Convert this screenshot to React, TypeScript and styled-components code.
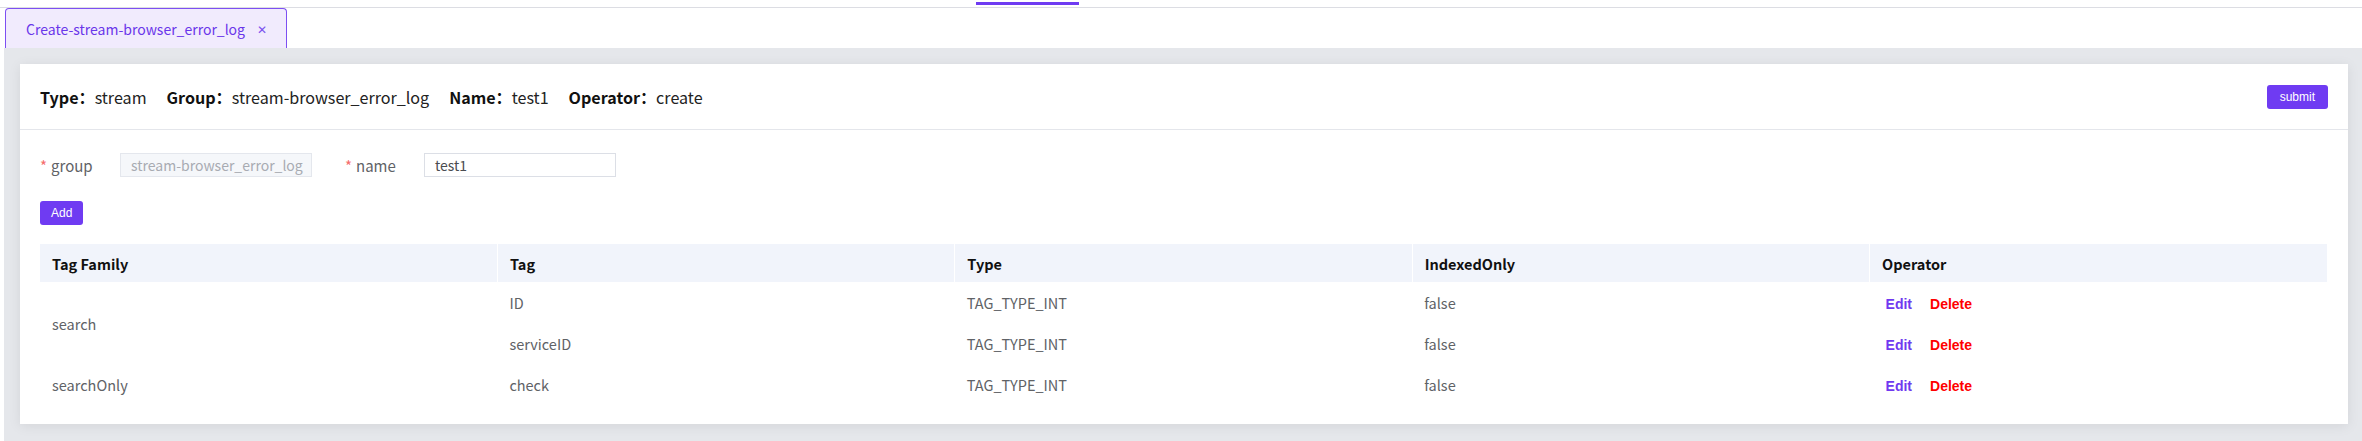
import styled, { createGlobalStyle } from "styled-components";

const GlobalStyles = createGlobalStyle`
  html, body {
    margin: 0;
    padding: 0;
    background: #ffffff;
    font-family: "Noto Sans CJK SC", "Noto Sans", sans-serif;
  }
  * {
    box-sizing: border-box;
  }
`;

const purple = "#6f3bf2";

const NavStrip = styled.div`
  height: 6px;
  padding-left: 976px;
  border-bottom: 1px solid #dcdde3;
`;

const NavIndicator = styled.div`
  width: 103px;
  height: 3px;
  margin-top: 2px;
  background: ${purple};
`;

const TabsBar = styled.div`
  display: flex;
  height: 40px;
  padding-left: 5px;
`;

const Tab = styled.div`
  display: flex;
  align-items: center;
  gap: 12px;
  height: 40px;
  width: 282px;
  padding: 0 0 0 20px;
  background: #f1ebfd;
  border: 1px solid #7d4ff2;
  border-bottom: none;
  border-radius: 4px 4px 0 0;
  color: #6a36ea;
  font-size: 14px;
`;

const Close = styled.span`
  font-size: 12px;
  color: #7b52ee;
`;

const Content = styled.div`
  margin-left: 4px;
  padding: 16px 14px 17px 16px;
  background: #e5e7eb;
`;

const Card = styled.div`
  background: #ffffff;
  box-shadow: 0 2px 12px rgba(0, 0, 0, 0.08);
`;

const CardHeader = styled.div`
  display: flex;
  align-items: center;
  justify-content: space-between;
  height: 66px;
  padding: 0 20px;
  border-bottom: 1px solid #e4e6eb;
`;

const Summary = styled.div`
  display: flex;
  gap: 20px;
  font-size: 16.1px;
  color: #222;
`;

const SummaryItem = styled.span`
  b {
    font-weight: 700;
    color: #111;
  }
`;

const Button = styled.button<{ $wide?: boolean }>`
  height: 24px;
  padding: 0 ${(p) => (p.$wide ? "13px" : "11px")};
  border: none;
  border-radius: 3px;
  background: ${purple};
  color: #fff;
  font-family: "Liberation Sans", Arial, sans-serif;
  font-size: 12px;
`;

const CardBody = styled.div`
  padding: 23px 21px 19px 20px;
`;

const FormRow = styled.div`
  display: flex;
  align-items: center;
  height: 24px;
`;

const Label = styled.label<{ $w: number }>`
  width: ${(p) => p.$w}px;
  font-size: 15px;
  color: #606266;
  &::before {
    content: "*";
    color: #f56c6c;
    margin-right: 4px;
  }
`;

const Input = styled.div<{ $disabled?: boolean }>`
  width: 192px;
  height: 24px;
  margin-right: 33px;
  padding: 0 10px;
  display: flex;
  align-items: center;
  white-space: nowrap;
  overflow: hidden;
  border: 1px solid ${(p) => (p.$disabled ? "#e4e7ed" : "#dcdfe6")};
  background: ${(p) => (p.$disabled ? "#f5f7fa" : "#ffffff")};
  color: ${(p) => (p.$disabled ? "#a8abb2" : "#4a4c50")};
  font-size: 14px;
`;

const AddRow = styled.div`
  margin: 21px 0 22px;
  height: 24px;
`;

const Table = styled.table`
  width: 100%;
  border-collapse: collapse;
  table-layout: fixed;
  font-size: 14.5px;
`;

const Th = styled.th`
  height: 38px;
  padding: 0 12px;
  text-align: left;
  background: #f1f4fb;
  border-right: 1px solid #ffffff;
  color: #111;
  font-weight: 700;
  &:last-child {
    border-right: none;
  }
`;

const Td = styled.td`
  height: 41px;
  padding: 0 12px;
  color: #606266;
`;

const Action = styled.span<{ $danger?: boolean }>`
  margin: 0 ${(p) => (p.$danger ? "0 0 18px" : "0 0 4px")};
  font-family: "Liberation Sans", Arial, sans-serif;
  font-size: 14px;
  font-weight: 700;
  color: ${(p) => (p.$danger ? "#ff0000" : "#7039f0")};
`;

const rows = [
  { family: "search", span: 2, tag: "ID" },
  { family: null, span: 0, tag: "serviceID" },
  { family: "searchOnly", span: 1, tag: "check" },
];

const App = () => {
  return (
    <>
      <GlobalStyles />
      <NavStrip>
        <NavIndicator />
      </NavStrip>
      <TabsBar>
        <Tab>
          Create-stream-browser_error_log
          <Close>✕</Close>
        </Tab>
      </TabsBar>
      <Content>
        <Card>
          <CardHeader>
            <Summary>
              <SummaryItem><b>Type：</b>stream</SummaryItem>
              <SummaryItem><b>Group：</b>stream-browser_error_log</SummaryItem>
              <SummaryItem><b>Name：</b>test1</SummaryItem>
              <SummaryItem><b>Operator：</b>create</SummaryItem>
            </Summary>
            <Button $wide>submit</Button>
          </CardHeader>
          <CardBody>
            <FormRow>
              <Label $w={80}>group</Label>
              <Input $disabled>stream-browser_error_log</Input>
              <Label $w={79}>name</Label>
              <Input>test1</Input>
            </FormRow>
            <AddRow>
              <Button>Add</Button>
            </AddRow>
            <Table>
              <thead>
                <tr>
                  <Th>Tag Family</Th>
                  <Th>Tag</Th>
                  <Th>Type</Th>
                  <Th>IndexedOnly</Th>
                  <Th>Operator</Th>
                </tr>
              </thead>
              <tbody>
                {rows.map((r) => (
                  <tr key={r.tag}>
                    {r.family && <Td rowSpan={r.span}>{r.family}</Td>}
                    <Td>{r.tag}</Td>
                    <Td>TAG_TYPE_INT</Td>
                    <Td>false</Td>
                    <Td>
                      <Action>Edit</Action>
                      <Action $danger>Delete</Action>
                    </Td>
                  </tr>
                ))}
              </tbody>
            </Table>
          </CardBody>
        </Card>
      </Content>
    </>
  );
};

export default App;
